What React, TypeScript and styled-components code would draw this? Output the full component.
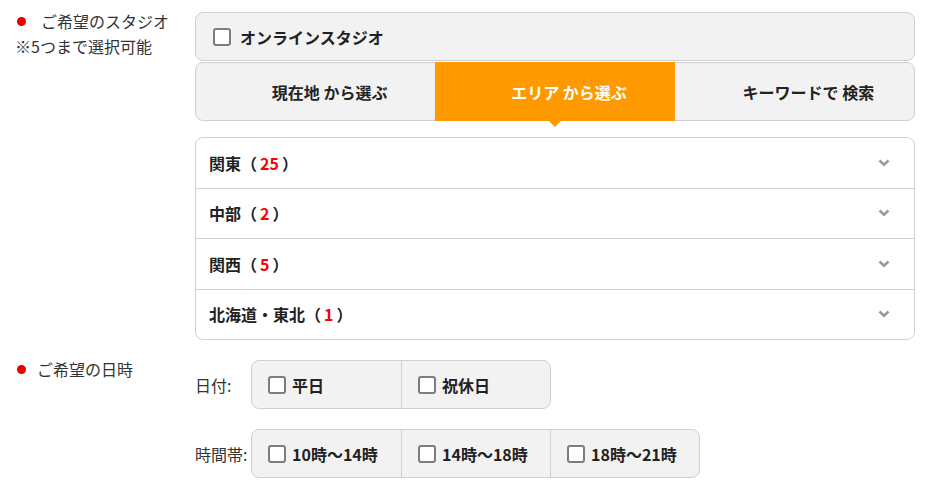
import React from "react";
import styled, { createGlobalStyle } from "styled-components";

const GlobalStyle = createGlobalStyle`
  body {
    margin: 0;
    background: #fff;
    font-family: "Noto Sans CJK JP", "Noto Sans", sans-serif;
    font-size: 16px;
    color: #333;
  }
`;

const areas = [
  { name: "関東", count: 25 },
  { name: "中部", count: 2 },
  { name: "関西", count: 5 },
  { name: "北海道・東北", count: 1 },
];

const tabs = ["現在地 から選ぶ", "エリア から選ぶ", "キーワードで 検索"];

const Checkbox = () => <Box />;

const Chevron = () => (
  <svg width="12" height="8" viewBox="0 0 12 8">
    <path
      d="M1.5 1.5 L6 5.8 L10.5 1.5"
      fill="none"
      stroke="#9a9a9a"
      strokeWidth="2.6"
    />
  </svg>
);

const App = () => {
  return (
    <>
      <GlobalStyle />
      <Page>
        <Section>
          <Label>
            <div className="head" style={{ gap: 15 }}>
              <Dot />
              ご希望のスタジオ
            </div>
            <div className="note">※5つまで選択可能</div>
          </Label>
          <Content>
            <OnlineBox>
              <Checkbox />
              オンラインスタジオ
            </OnlineBox>
            <Tabs>
              {tabs.map((t, i) => (
                <Tab key={t} active={i === 1}>
                  {t}
                </Tab>
              ))}
            </Tabs>
            <AreaList>
              {areas.map((a) => (
                <AreaRow key={a.name}>
                  <span>
                    {a.name}（<Count>{a.count}</Count>）
                  </span>
                  <Chevron />
                </AreaRow>
              ))}
            </AreaList>
          </Content>
        </Section>
        <Section>
          <Label>
            <div className="head" style={{ gap: 11 }}>
              <Dot />
              ご希望の日時
            </div>
          </Label>
          <Content>
            <FieldRow>
              <FieldLabel>日付:</FieldLabel>
              <Group>
                {["平日", "祝休日"].map((d) => (
                  <Cell key={d}>
                    <Checkbox />
                    {d}
                  </Cell>
                ))}
              </Group>
            </FieldRow>
            <FieldRow>
              <FieldLabel>時間帯:</FieldLabel>
              <Group>
                {["10時〜14時", "14時〜18時", "18時〜21時"].map((d) => (
                  <Cell key={d}>
                    <Checkbox />
                    {d}
                  </Cell>
                ))}
              </Group>
            </FieldRow>
          </Content>
        </Section>
      </Page>
    </>
  );
};

export default App;

const Page = styled.div`
  padding: 12px 12px 0 15px;
  display: flex;
  flex-direction: column;
  gap: 20px;
`;

const Section = styled.div`
  display: flex;
`;

const Label = styled.div`
  width: 180px;
  flex-shrink: 0;
  margin-top: -3px;
  line-height: 25px;
  color: #333;
  .head {
    display: flex;
    align-items: center;
    padding-left: 2px;
  }
`;

const Dot = styled.span`
  width: 9px;
  height: 9px;
  border-radius: 50%;
  background: #e60000;
  flex-shrink: 0;
`;

const Content = styled.div`
  flex: 1;
  display: flex;
  flex-direction: column;
`;

const Box = styled.span`
  width: 18px;
  height: 18px;
  box-sizing: border-box;
  border: 2px solid #7d7d7d;
  border-radius: 3px;
  background: #fff;
  flex-shrink: 0;
`;

const OnlineBox = styled.div`
  height: 49px;
  box-sizing: border-box;
  display: flex;
  align-items: center;
  gap: 9px;
  padding-left: 17px;
  background: #f2f2f2;
  border: 1px solid #d0d0d0;
  border-radius: 8px;
  font-weight: 700;
  color: #222;
  margin-bottom: 1px;
`;

const Tabs = styled.div`
  display: grid;
  grid-template-columns: repeat(3, 1fr);
  height: 59px;
  box-sizing: border-box;
  background: #f2f2f2;
  border: 1px solid #d0d0d0;
  border-radius: 8px;
  margin-bottom: 16px;
`;

const Tab = styled.div<{ active?: boolean }>`
  position: relative;
  display: flex;
  align-items: center;
  justify-content: center;
  padding-left: 28px;
  font-weight: 700;
  color: ${(p) => (p.active ? "#fff" : "#222")};
  background: ${(p) => (p.active ? "#ff9900" : "transparent")};
  margin: ${(p) => (p.active ? "-1px 0" : "0")};
  &::after {
    content: "";
    display: ${(p) => (p.active ? "block" : "none")};
    position: absolute;
    left: 50%;
    bottom: -6px;
    transform: translateX(-50%);
    border-left: 6px solid transparent;
    border-right: 6px solid transparent;
    border-top: 6px solid #ff9900;
  }
`;

const AreaList = styled.div`
  border: 1px solid #d0d0d0;
  border-radius: 8px;
  overflow: hidden;
`;

const AreaRow = styled.div`
  height: 49.5px;
  display: flex;
  align-items: center;
  justify-content: space-between;
  padding: 0 24px 0 13px;
  font-weight: 700;
  color: #222;
  & + & {
    border-top: 1px solid #d0d0d0;
  }
`;

const Count = styled.span`
  color: #ff0000;
  margin: 0 3px;
`;

const FieldRow = styled.div`
  display: flex;
  align-items: center;
  & + & {
    margin-top: 20px;
  }
`;

const FieldLabel = styled.div`
  width: 56px;
  flex-shrink: 0;
  color: #333;
`;

const Group = styled.div`
  display: flex;
  height: 49px;
  box-sizing: border-box;
  background: #f2f2f2;
  border: 1px solid #d0d0d0;
  border-radius: 8px;
`;

const Cell = styled.div`
  width: 149px;
  display: flex;
  align-items: center;
  gap: 6px;
  padding-left: 16px;
  box-sizing: border-box;
  font-weight: 700;
  color: #222;
  & + & {
    border-left: 1px solid #d0d0d0;
  }
`;
